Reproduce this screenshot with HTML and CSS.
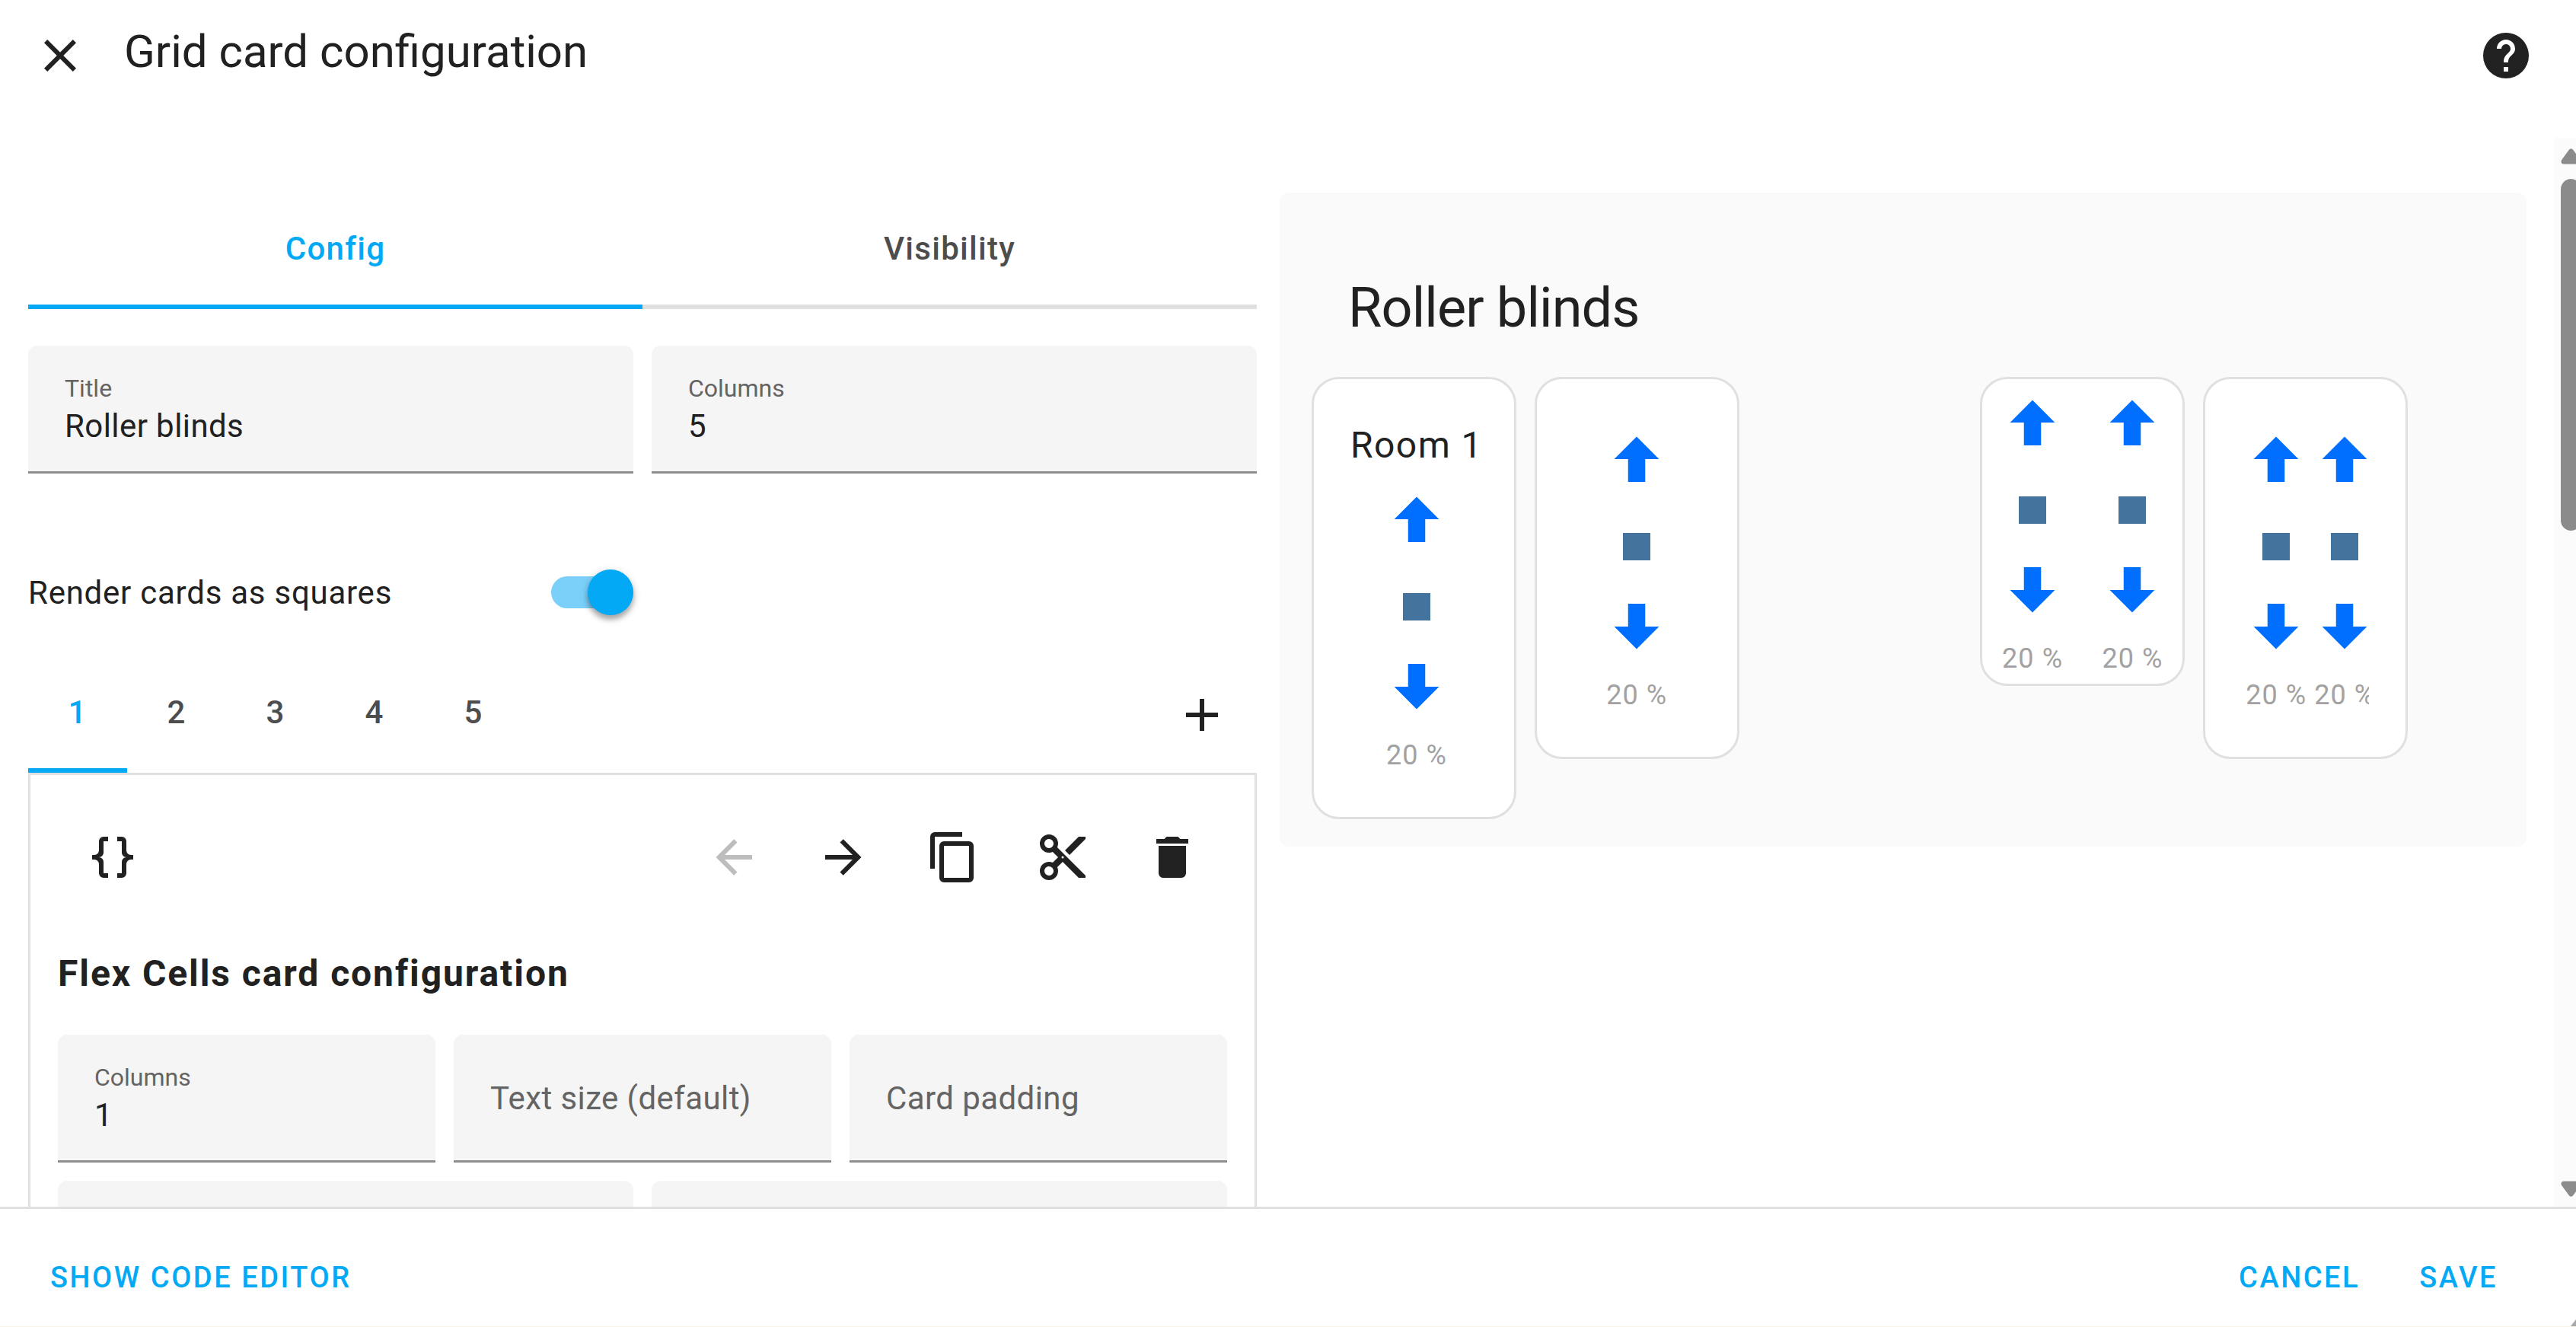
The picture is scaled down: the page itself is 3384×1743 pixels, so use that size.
FILE: index.html
```html
<!DOCTYPE html>
<html lang="en">
<head>
<meta charset="utf-8">
<title>Grid card configuration</title>
<link rel="stylesheet" href="styles.css">
</head>
<body>
<svg class="sprite" aria-hidden="true">
  <symbol id="up" viewBox="0 0 24 24"><path d="M15,20H9V12H4.16L12,4.16L19.84,12H15V20Z"/></symbol>
  <symbol id="stop" viewBox="0 0 24 24"><path d="M18,18H6V6H18V18Z"/></symbol>
  <symbol id="down" viewBox="0 0 24 24"><path d="M9,4H15V12H19.84L12,19.84L4.16,12H9V4Z"/></symbol>
</svg>
<div class="dialog">
  <header class="header">
    <button class="icon-button" aria-label="Close"><svg class="icon" viewBox="0 0 24 24"><path d="M19,6.41L17.59,5L12,10.59L6.41,5L5,6.41L10.59,12L5,17.59L6.41,19L12,13.41L17.59,19L19,17.59L13.41,12L19,6.41Z"/></svg></button>
    <h1 class="title">Grid card configuration</h1>
    <a class="icon-button" href="#help" aria-label="Help"><svg class="icon" viewBox="0 0 24 24"><path d="M15.07,11.25L14.17,12.17C13.45,12.89 13,13.5 13,15H11V14.5C11,13.39 11.45,12.39 12.17,11.67L13.41,10.41C13.78,10.05 14,9.55 14,9C14,7.89 13.1,7 12,7A2,2 0 0,0 10,9H8A4,4 0 0,1 12,5A4,4 0 0,1 16,9C16,9.88 15.64,10.67 15.07,11.25M13,19H11V17H13M12,2A10,10 0 0,0 2,12A10,10 0 0,0 12,22A10,10 0 0,0 22,12C22,6.47 17.5,2 12,2Z"/></svg></a>
  </header>

  <div class="body">
    <main class="content">
      <section class="editor">
        <nav class="tabs">
          <button class="tab active">Config</button>
          <button class="tab">Visibility</button>
        </nav>
        <div class="row two">
          <label class="field"><span class="label">Title</span><input type="text" value="Roller blinds"></label>
          <label class="field"><span class="label">Columns</span><input type="text" inputmode="numeric" value="5"></label>
        </div>
        <div class="row two">
          <label class="toggle">Render cards as squares<input class="switch" type="checkbox" role="switch" checked></label>
        </div>
        <nav class="pages">
          <button class="tab page active">1</button>
          <button class="tab page">2</button>
          <button class="tab page">3</button>
          <button class="tab page">4</button>
          <button class="tab page">5</button>
          <button class="icon-button add" aria-label="Add card"><svg class="icon" viewBox="0 0 24 24"><path d="M19,13H13V19H11V13H5V11H11V5H13V11H19V13Z"/></svg></button>
        </nav>
        <div class="panel">
          <div class="toolbar">
            <button class="icon-button tool first" aria-label="Edit as YAML"><svg class="icon" viewBox="0 0 24 24"><path d="M8,3A2,2 0 0,0 6,5V9A2,2 0 0,1 4,11H3V13H4A2,2 0 0,1 6,15V19A2,2 0 0,0 8,21H10V19H8V14A2,2 0 0,0 6,12A2,2 0 0,0 8,10V5H10V3M16,3A2,2 0 0,1 18,5V9A2,2 0 0,0 20,11H21V13H20A2,2 0 0,0 18,15V19A2,2 0 0,1 16,21H14V19H16V14A2,2 0 0,1 18,12A2,2 0 0,1 16,10V5H14V3H16Z"/></svg></button>
            <button class="icon-button tool" aria-label="Move before" disabled><svg class="icon" viewBox="0 0 24 24"><path d="M20,11V13H8L13.5,18.5L12.08,19.92L4.16,12L12.08,4.08L13.5,5.5L8,11H20Z"/></svg></button>
            <button class="icon-button tool" aria-label="Move after"><svg class="icon" viewBox="0 0 24 24"><path d="M4,11V13H16L10.5,18.5L11.92,19.92L19.84,12L11.92,4.08L10.5,5.5L16,11H4Z"/></svg></button>
            <button class="icon-button tool" aria-label="Copy"><svg class="icon" viewBox="0 0 24 24"><path d="M19,21H8V7H19M19,5H8A2,2 0 0,0 6,7V21A2,2 0 0,0 8,23H19A2,2 0 0,0 21,21V7A2,2 0 0,0 19,5M16,1H4A2,2 0 0,0 2,3V17H4V3H16V1Z"/></svg></button>
            <button class="icon-button tool" aria-label="Cut"><svg class="icon" viewBox="0 0 24 24"><path d="M19,3L13,9L15,11L22,4V3M12,12.5A0.5,0.5 0 0,1 11.5,12A0.5,0.5 0 0,1 12,11.5A0.5,0.5 0 0,1 12.5,12A0.5,0.5 0 0,1 12,12.5M6,20A2,2 0 0,1 4,18C4,16.89 4.9,16 6,16A2,2 0 0,1 8,18C8,19.11 7.1,20 6,20M6,8A2,2 0 0,1 4,6C4,4.89 4.9,4 6,4A2,2 0 0,1 8,6C8,7.11 7.1,8 6,8M9.64,7.64C9.87,7.14 10,6.59 10,6A4,4 0 0,0 6,2A4,4 0 0,0 2,6A4,4 0 0,0 6,10C6.59,10 7.14,9.87 7.64,9.64L10,12L7.64,14.36C7.14,14.13 6.59,14 6,14A4,4 0 0,0 2,18A4,4 0 0,0 6,22A4,4 0 0,0 10,18C10,17.41 9.87,16.86 9.64,16.36L12,14L19,21H22V20L9.64,7.64Z"/></svg></button>
            <button class="icon-button tool" aria-label="Delete"><svg class="icon" viewBox="0 0 24 24"><path d="M19,4H15.5L14.5,3H9.5L8.5,4H5V6H19M6,19A2,2 0 0,0 8,21H16A2,2 0 0,0 18,19V7H6V19Z"/></svg></button>
          </div>
          <h2 class="heading">Flex Cells card configuration</h2>
          <div class="row three">
            <label class="field"><span class="label">Columns</span><input type="text" inputmode="numeric" value="1"></label>
            <label class="field"><input type="text" placeholder="Text size (default)" aria-label="Text size (default)"></label>
            <label class="field"><input type="text" placeholder="Card padding" aria-label="Card padding"></label>
          </div>
          <div class="row two next">
            <label class="field"><input type="text" aria-label="Width"></label>
            <label class="field"><input type="text" aria-label="Height"></label>
          </div>
        </div>
      </section>

      <section class="preview">
        <h2 class="preview-title">Roller blinds</h2>
        <div class="cards">
          <article class="card padded">
            <div class="cells">
              <div class="room">Room 1</div>
              <div class="blind"><svg class="move"><use href="#up"/></svg><svg class="halt"><use href="#stop"/></svg><svg class="move"><use href="#down"/></svg><span class="level">20 %</span></div>
            </div>
          </article>
          <article class="card padded">
            <div class="cells">
              <div class="blind"><svg class="move"><use href="#up"/></svg><svg class="halt"><use href="#stop"/></svg><svg class="move"><use href="#down"/></svg><span class="level">20 %</span></div>
            </div>
          </article>
          <div></div>
          <article class="card">
            <div class="cells pair">
              <div class="blind"><svg class="move"><use href="#up"/></svg><svg class="halt"><use href="#stop"/></svg><svg class="move"><use href="#down"/></svg><span class="level">20 %</span></div>
              <div class="blind"><svg class="move"><use href="#up"/></svg><svg class="halt"><use href="#stop"/></svg><svg class="move"><use href="#down"/></svg><span class="level">20 %</span></div>
            </div>
          </article>
          <article class="card padded">
            <div class="cells pair">
              <div class="blind"><svg class="move"><use href="#up"/></svg><svg class="halt"><use href="#stop"/></svg><svg class="move"><use href="#down"/></svg><span class="level">20 %</span></div>
              <div class="blind"><svg class="move"><use href="#up"/></svg><svg class="halt"><use href="#stop"/></svg><svg class="move"><use href="#down"/></svg><span class="level">20 %</span></div>
            </div>
          </article>
        </div>
      </section>
    </main>
    <div class="scrollbar" aria-hidden="true">
      <svg class="scroll-arrow" viewBox="0 0 27 24"><path d="M4,19L13.500,6L23,19Z"/></svg>
      <div class="thumb"></div>
      <svg class="scroll-arrow" viewBox="0 0 27 24"><path d="M4,5L13.500,18L23,5Z"/></svg>
    </div>
  </div>

  <footer class="footer">
    <button class="action">SHOW CODE EDITOR</button>
    <div class="confirm">
      <button class="action">CANCEL</button>
      <button class="action">SAVE</button>
    </div>
    <div class="grip"></div>
  </footer>
</div>
</body>
</html>
```
FILE: styles.css
```css
:root {
  --text: #212121;
  --muted: #646464;
  --primary: #03a9f4;
  --line: #e0e0e0;
}

* { box-sizing: border-box; }

body {
  margin: 0;
  background: #fff;
  color: var(--text);
  font-family: Roboto, "Liberation Sans", sans-serif;
  font-size: 42px;
}

button, input { font: inherit; letter-spacing: inherit; color: inherit; }
button { border: 0; padding: 0; background: none; }
h1, h2 { margin: 0; }

.sprite { display: none; }

.dialog {
  display: flex;
  flex-direction: column;
  height: 100vh;
  overflow: hidden;
}

.header {
  display: flex;
  align-items: flex-start;
  gap: 48px;
  height: 181px;
  flex: none;
  padding: 37px 56px 0 43px;
}
.title { flex: 1; font-size: 60px; line-height: 62px; font-weight: 400; }
.icon-button { display: flex; align-items: center; justify-content: center; color: var(--text); }
.icon { display: block; width: 72px; height: 72px; fill: currentColor; }

.body { display: flex; flex: 1; min-height: 0; }
.content {
  flex: 1;
  display: grid;
  grid-template-columns: 1614fr 1638fr;
  gap: 30px;
  align-items: start;
  padding: 72px 36px 0 37px;
  overflow: hidden;
}

.editor { min-width: 0; letter-spacing: 0.01em; }
.tabs { display: flex; margin-bottom: 48px; }
.tab {
  flex: 1;
  height: 153px;
  border-bottom: 6px solid var(--line);
  color: #4d4d4d;
  font-weight: 500;
  letter-spacing: 0.03em;
}
.tab.active { color: var(--primary); border-color: var(--primary); }

.row { display: grid; gap: 24px; }
.two { grid-template-columns: repeat(2, 1fr); }
.three { grid-template-columns: repeat(3, 1fr); }
.next { margin-top: 24px; }

.field {
  display: flex;
  flex-direction: column;
  justify-content: center;
  height: 168px;
  padding: 2px 48px 0;
  background: #f5f5f5;
  border-bottom: 3px solid #8e8e8e;
  border-radius: 12px 12px 0 0;
}
.label { font-size: 32px; line-height: 43px; letter-spacing: 0; color: var(--muted); }
.field input {
  width: 100%;
  height: 54px;
  padding: 0;
  border: 0;
  outline: 0;
  background: none;
}
.field input::placeholder { color: var(--muted); opacity: 1; }

.toggle {
  display: flex;
  align-items: center;
  justify-content: space-between;
  height: 168px;
  margin-top: 72px;
  letter-spacing: 0.018em;
}
.switch {
  appearance: none;
  position: relative;
  width: 108px;
  height: 42px;
  margin: 0;
  border-radius: 21px;
  background: #7bd0f9;
}
.switch::after {
  content: "";
  position: absolute;
  top: -9px;
  right: 0;
  width: 60px;
  height: 60px;
  border-radius: 50%;
  background: var(--primary);
  box-shadow: 0 6px 6px rgba(0, 0, 0, 0.25), 0 3px 12px rgba(0, 0, 0, 0.18);
}

.pages { display: flex; }
.page { flex: none; width: 130px; border-color: transparent; }
.add { width: 144px; margin-left: auto; }

.panel { padding: 36px; border: 3px solid var(--line); }
.toolbar { display: flex; }
.tool { width: 144px; height: 144px; }
.tool:disabled { color: #bdbdbd; }
.first { margin-right: auto; }
.heading {
  margin: 48px 0 47px;
  font-size: 48px;
  line-height: 66px;
  font-weight: 700;
  letter-spacing: 0.04em;
}

.preview {
  min-width: 0;
  padding: 116px 42px 36px;
  background: #fafafa;
  border-radius: 12px;
}
.preview-title {
  padding: 0 48px;
  margin-bottom: 54px;
  font-size: 72px;
  line-height: 72px;
  font-weight: 400;
  letter-spacing: -0.012em;
}
.cards {
  display: grid;
  grid-template-columns: repeat(5, minmax(0, 1fr));
  gap: 24px;
  align-items: start;
  max-width: 1440px;
}
.card {
  border: 3px solid var(--line);
  border-radius: 36px;
  background: #fff;
}
.padded { padding: 48px; }
.cells { display: grid; grid-template-columns: minmax(auto, 1fr); }
.pair { grid-template-columns: repeat(2, minmax(90px, 1fr)); overflow: hidden; }
.room {
  padding: 3px 0 4px;
  font-size: 48px;
  line-height: 72px;
  text-align: center;
  white-space: nowrap;
  letter-spacing: 0.03em;
}
.blind { display: flex; flex-direction: column; align-items: center; padding: 12px 0 6px; }
.move { width: 90px; height: 90px; fill: #006eff; }
.halt { width: 72px; height: 72px; margin: 34px 0 24px; fill: #44739e; }
.level {
  margin-top: 18px;
  font-size: 36px;
  line-height: 54px;
  letter-spacing: 0.03em;
  white-space: nowrap;
  color: #a2a2a2;
}

.scrollbar {
  display: flex;
  flex-direction: column;
  flex: none;
  width: 29px;
  padding: 12px 0 11px 9px;
  background: #fbfbfb;
  overflow: hidden;
}
.scroll-arrow {
  flex: none;
  width: 27px;
  height: 24px;
  fill: #8b8b8b;
  stroke: #8b8b8b;
  stroke-width: 7px;
  stroke-linejoin: round;
}
.thumb {
  width: 27px;
  height: 462px;
  margin: 18px 0 auto;
  border-radius: 14px;
  background: #8b8b8b;
}

.footer {
  position: relative;
  display: flex;
  justify-content: space-between;
  flex: none;
  height: 158px;
  padding: 36px 79px 0 42px;
  border-top: 3px solid var(--line);
  border-bottom: 1px solid #faf1e8;
}
.confirm { display: flex; gap: 30px; }
.action {
  height: 108px;
  padding: 0 24px;
  color: var(--primary);
  font-size: 38px;
  font-weight: 500;
  letter-spacing: 0.067em;
}
.grip {
  position: absolute;
  right: 0;
  bottom: 0;
  width: 7px;
  height: 9px;
  background: #a8a8a8;
  clip-path: polygon(100% 0, 100% 100%, 0 100%);
}
```
